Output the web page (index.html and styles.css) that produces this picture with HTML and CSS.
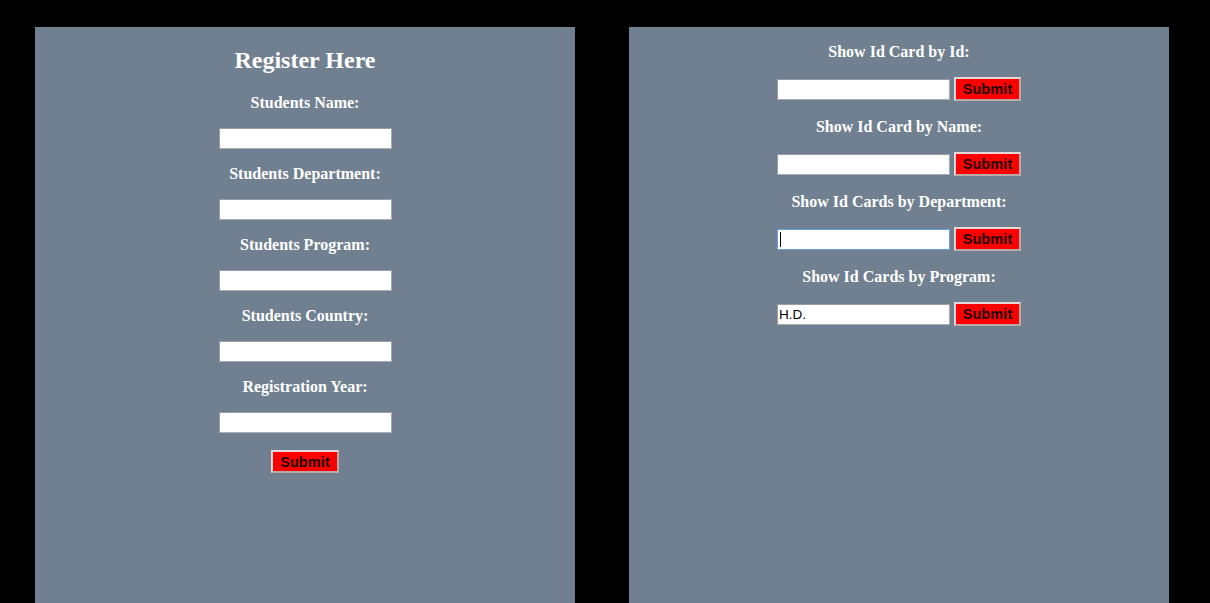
FILE: index.html
```html
<!DOCTYPE html>
<html>
<head>
<meta charset="utf-8">
<title>Register</title>
<link rel="stylesheet" href="styles.css">
</head>
<body>
<div class="page">
  <section class="panel register">
    <h2 class="title">Register Here</h2>
    <div class="field">
      <div class="label">Students Name:</div>
      <input class="text" type="text">
    </div>
    <div class="field">
      <div class="label">Students Department:</div>
      <input class="text" type="text">
    </div>
    <div class="field">
      <div class="label">Students Program:</div>
      <input class="text" type="text">
    </div>
    <div class="field">
      <div class="label">Students Country:</div>
      <input class="text" type="text">
    </div>
    <div class="field">
      <div class="label">Registration Year:</div>
      <input class="text" type="text">
    </div>
    <button class="submit submit-main" type="button">Submit</button>
  </section>
  <section class="panel search">
    <div class="query">
      <div class="label">Show Id Card by Id:</div>
      <div class="row">
        <input class="text" type="text">
        <button class="submit" type="button">Submit</button>
      </div>
    </div>
    <div class="query">
      <div class="label">Show Id Card by Name:</div>
      <div class="row">
        <input class="text" type="text">
        <button class="submit" type="button">Submit</button>
      </div>
    </div>
    <div class="query">
      <div class="label">Show Id Cards by Department:</div>
      <div class="row">
        <span class="focus-wrap">
          <input class="text focused" type="text">
          <span class="caret"></span>
        </span>
        <button class="submit" type="button">Submit</button>
      </div>
    </div>
    <div class="query">
      <div class="label">Show Id Cards by Program:</div>
      <div class="row">
        <input class="text" type="text" value="H.D.">
        <button class="submit" type="button">Submit</button>
      </div>
    </div>
  </section>
</div>
</body>
</html>
```

FILE: styles.css
```css
html, body {
  margin: 0;
  padding: 0;
  background: #000;
  height: 100%;
  overflow: hidden;
}

.page {
  display: flex;
  gap: 54px;
  padding: 27px 0 0 35px;
  font-family: "Liberation Serif", "Times New Roman", serif;
}

.panel {
  width: 540px;
  height: calc(100vh - 27px);
  background: #708090;
  display: flex;
  flex-direction: column;
  align-items: center;
  box-sizing: border-box;
}

.register {
  padding-top: 19px;
}

.title {
  margin: 0 0 20px;
  font-size: 24px;
  line-height: 28px;
  font-weight: bold;
  color: #fff;
}

.label {
  font-size: 16px;
  line-height: 18px;
  font-weight: bold;
  color: #fff;
  text-align: center;
}

.field {
  display: flex;
  flex-direction: column;
  align-items: center;
  gap: 16px;
  margin-bottom: 16px;
}

.text {
  width: 173px;
  height: 21px;
  box-sizing: border-box;
  margin: 0;
  padding: 0 1px;
  border: 1px solid #a9adb3;
  border-top-color: #9a9ea4;
  border-left-color: #9a9ea4;
  background: #fff;
  font-family: "Liberation Sans", Arial, sans-serif;
  font-size: 13.5px;
  color: #000;
  outline: none;
}

.submit {
  width: 67px;
  height: 24px;
  box-sizing: border-box;
  margin: 0;
  padding: 0;
  background: #ff0000;
  border: 2px solid;
  border-color: #e6d8d8 #b9a9a9 #b9a9a9 #e6d8d8;
  font-family: "Liberation Sans", Arial, sans-serif;
  font-weight: bold;
  font-size: 14.5px;
  color: #1a0000;
  letter-spacing: 0.1px;
}

.submit-main {
  margin-top: 1px;
  height: 23px;
  width: 68px;
}

.search {
  padding-top: 16px;
}

.query {
  display: flex;
  flex-direction: column;
  align-items: center;
  gap: 16px;
  margin-bottom: 17px;
}

.row {
  display: flex;
  align-items: center;
  gap: 4px;
}

.focus-wrap {
  position: relative;
  display: block;
}

.focused {
  border-color: #6e9fd8;
}

.caret {
  position: absolute;
  left: 3px;
  top: 3px;
  width: 1px;
  height: 15px;
  background: #000;
}
```
